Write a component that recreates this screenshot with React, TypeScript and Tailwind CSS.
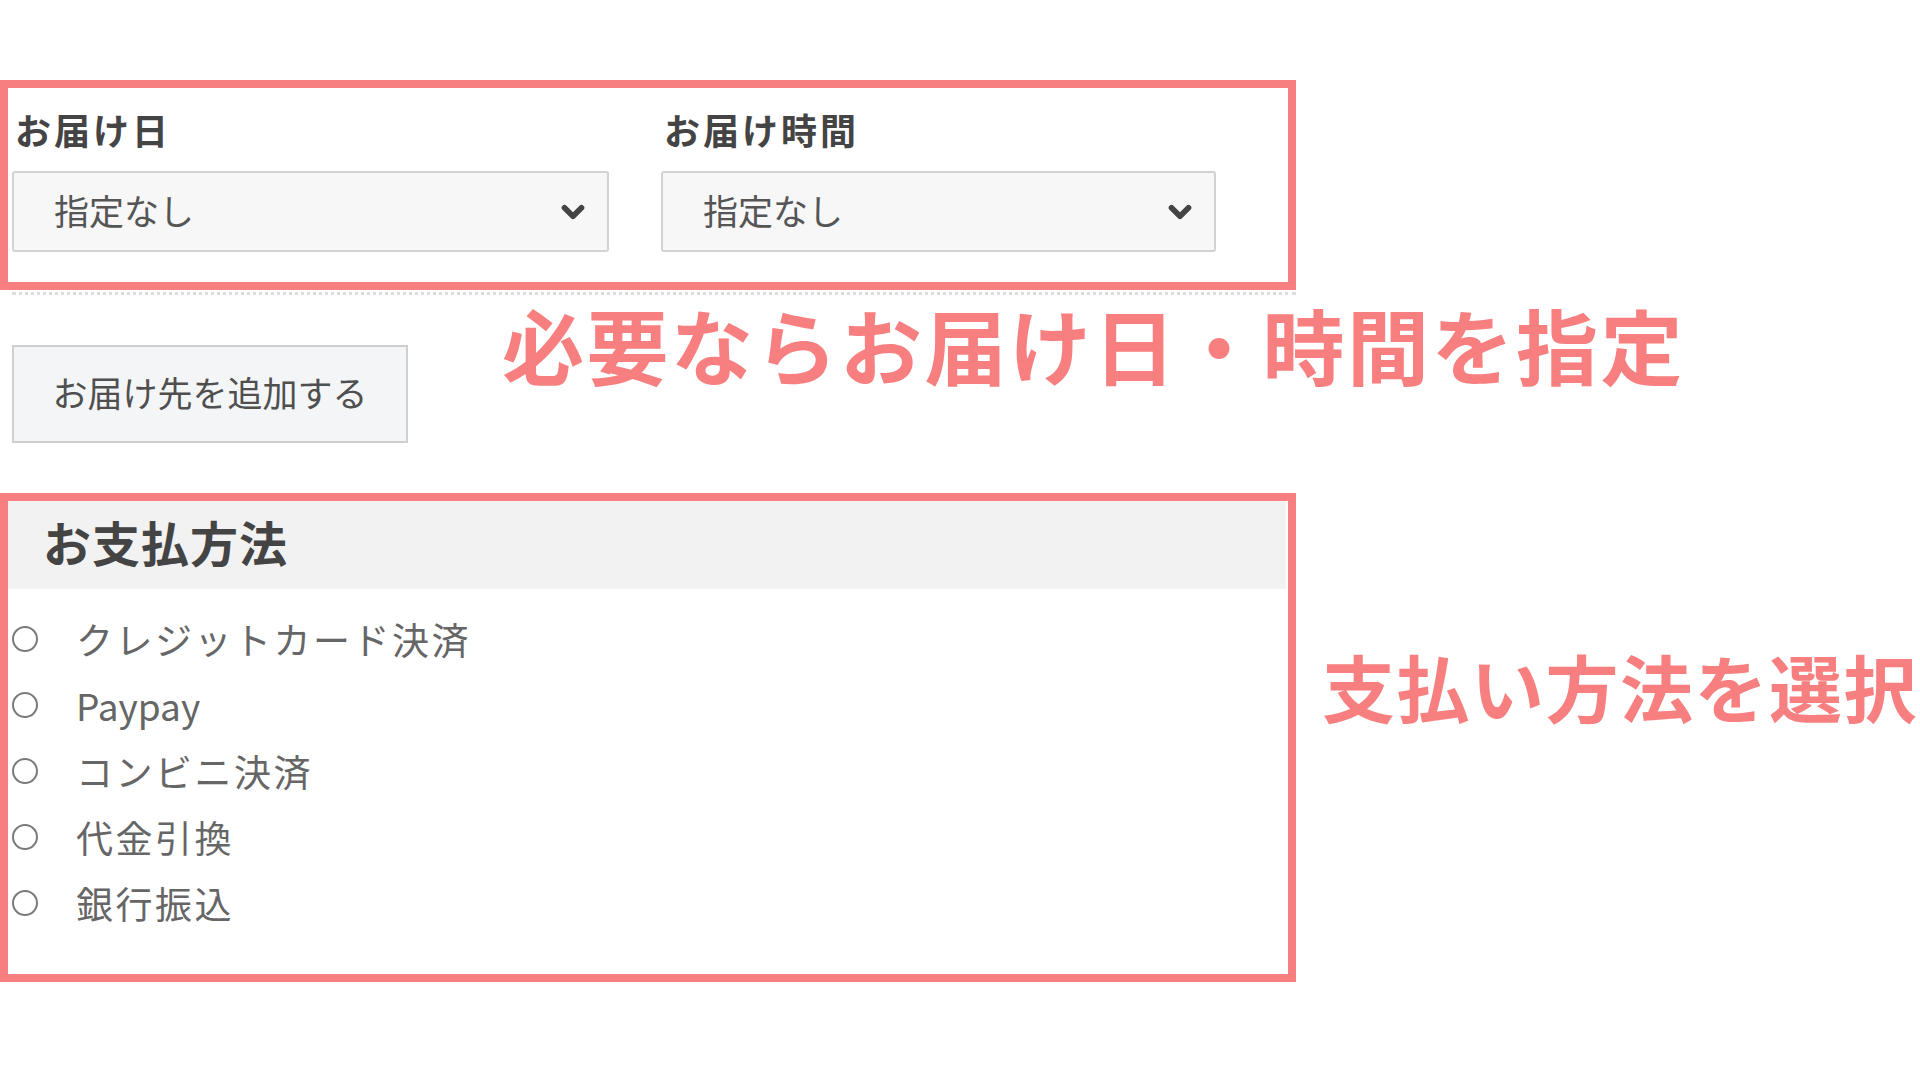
import { ChevronDown } from 'lucide-react';

const jp = '[font-family:"Noto_Sans_CJK_JP","Noto_Sans",sans-serif]';

const payments = ['クレジットカード決済', 'Paypay', 'コンビニ決済', '代金引換', '銀行振込'];

const SelectBox = ({ label, width }: { label: string; width: string }) => (
  <div className={`flex flex-col ${width}`}>
    <div className="pl-[3px] text-[36px] leading-[44px] font-bold tracking-[3px] text-[#444]">{label}</div>
    <div className="mt-[20px] flex h-[81px] items-center justify-between rounded-[3px] border-2 border-[#d2d2d2] bg-[#f7f7f7] pb-[4px] pl-[40px] pr-[17px]">
      <span className="text-[35px] leading-none text-[#555]">指定なし</span>
      <ChevronDown className="mt-[4px] h-[34px] w-[34px] text-[#444]" strokeWidth={4} />
    </div>
  </div>
);

const App = () => {
  return (
    <div className={`h-[1080px] w-[1920px] overflow-hidden bg-white pt-[80px] ${jp}`}>
      {/* delivery date / time */}
      <div className="w-[1296px] border-[8px] border-[#f77f7f] pb-[30px] pl-[4px] pt-[19px]">
        <div className="flex gap-[52px]">
          <SelectBox label="お届け日" width="w-[597px]" />
          <SelectBox label="お届け時間" width="w-[555px]" />
        </div>
      </div>
      <div className="ml-[12px] mt-[2px] w-[1284px] border-t-[3px] border-dotted border-[#dcdcdc]" />

      <div className="flex h-[198px] items-start">
        <button className="ml-[12px] mt-[50px] flex h-[98px] w-[396px] items-center justify-center border-2 border-[#cfcfcf] bg-[#f4f5f6] pb-[4px] text-[35px] text-[#4f4f4f]">
          お届け先を追加する
        </button>
        <div className="ml-[94px] mt-[8px] text-[82px] font-bold leading-none tracking-[2.5px] text-[#f77f7f]">
          必要ならお届け日・時間を指定
        </div>
      </div>

      {/* payment method */}
      <div className="flex items-start">
        <div className="w-[1296px] border-[8px] border-[#f77f7f] pb-[38px]">
          <div className="mr-[2px] flex h-[88px] items-center bg-[#f2f2f2] pb-[8px] pl-[35px] text-[48px] font-bold tracking-[1px] text-[#444]">
            お支払方法
          </div>
          <div className="mt-[17px] flex flex-col">
            {payments.map((p) => (
              <label key={p} className="flex h-[66px] items-center">
                <span className="ml-[4px] h-[26px] w-[26px] rounded-full border-2 border-[#7a7a7a] bg-white" />
                <span
                  className={`ml-[38px] text-[37px] leading-none text-[#666] ${
                    p === 'Paypay' ? 'tracking-normal' : 'tracking-[2.5px]'
                  }`}
                >
                  {p}
                </span>
              </label>
            ))}
          </div>
        </div>
        <div className="ml-[26px] mt-[156px] text-[73px] font-bold leading-none tracking-[1.5px] text-[#f77f7f]">
          支払い方法を選択
        </div>
      </div>
    </div>
  );
};

export default App;
